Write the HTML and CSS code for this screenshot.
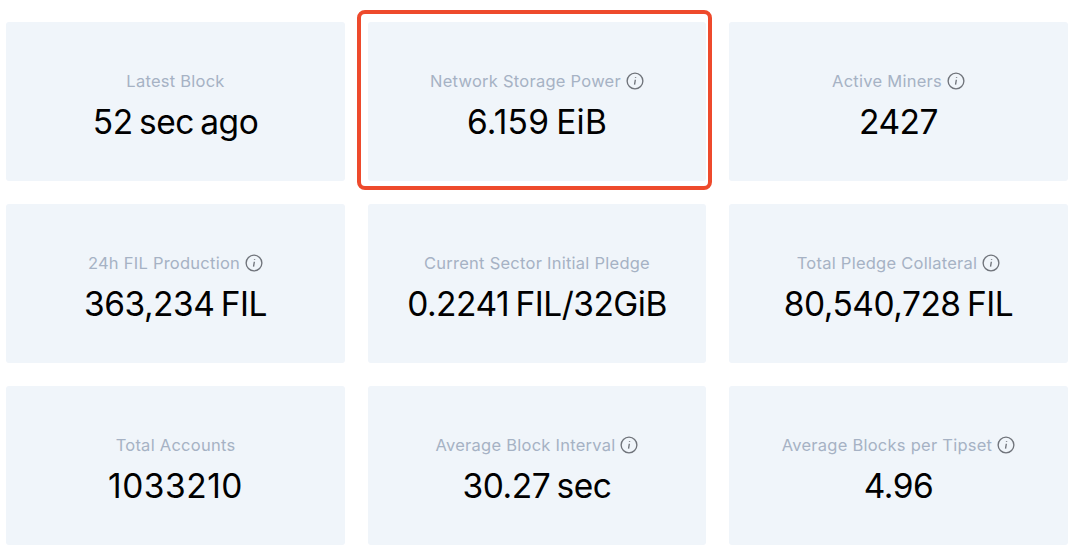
FILE: index.html
```html
<!DOCTYPE html>
<html lang="en">
<head>
<meta charset="utf-8">
<title>Network Stats</title>
<link rel="stylesheet" href="styles.css">
</head>
<body>
<main class="grid">
  <section class="card"><div class="label"><span>Latest Block</span></div><div class="value">52 sec ago</div></section>
  <section class="card"><div class="label"><span>Network Storage Power</span><svg class="info" viewBox="0 0 16 16"><circle cx="8" cy="8" r="7"/><path d="M8.3 6.9 7.6 11.2M8.5 4.4v.6"/></svg></div><div class="value value-loose">6.159 EiB</div><div class="highlight"></div></section>
  <section class="card"><div class="label"><span>Active Miners</span><svg class="info" viewBox="0 0 16 16"><circle cx="8" cy="8" r="7"/><path d="M8.3 6.9 7.6 11.2M8.5 4.4v.6"/></svg></div><div class="value">2427</div></section>
  <section class="card"><div class="label"><span>24h FIL Production</span><svg class="info" viewBox="0 0 16 16"><circle cx="8" cy="8" r="7"/><path d="M8.3 6.9 7.6 11.2M8.5 4.4v.6"/></svg></div><div class="value">363,234 FIL</div></section>
  <section class="card"><div class="label"><span>Current Sector Initial Pledge</span></div><div class="value">0.2241 FIL/32GiB</div></section>
  <section class="card"><div class="label"><span>Total Pledge Collateral</span><svg class="info" viewBox="0 0 16 16"><circle cx="8" cy="8" r="7"/><path d="M8.3 6.9 7.6 11.2M8.5 4.4v.6"/></svg></div><div class="value">80,540,728 FIL</div></section>
  <section class="card"><div class="label"><span>Total Accounts</span></div><div class="value value-wide">1033210</div></section>
  <section class="card"><div class="label"><span>Average Block Interval</span><svg class="info" viewBox="0 0 16 16"><circle cx="8" cy="8" r="7"/><path d="M8.3 6.9 7.6 11.2M8.5 4.4v.6"/></svg></div><div class="value">30.27 sec</div></section>
  <section class="card"><div class="label"><span>Average Blocks per Tipset</span><svg class="info" viewBox="0 0 16 16"><circle cx="8" cy="8" r="7"/><path d="M8.3 6.9 7.6 11.2M8.5 4.4v.6"/></svg></div><div class="value">4.96</div></section>
</main>
</body>
</html>
```
FILE: styles.css
```css
html, body {
  margin: 0;
  padding: 0;
  background: #fff;
}
body {
  width: 1080px;
  height: 556px;
  overflow: hidden;
  font-family: Inter, "Liberation Sans", sans-serif;
}
.grid {
  display: grid;
  grid-template-columns: 339px 338px 339px;
  grid-auto-rows: 159px;
  gap: 23px;
  padding: 22px 0 0 6px;
}
.card {
  position: relative;
  background: #f0f5fa;
  border-radius: 3px;
  display: flex;
  flex-direction: column;
  align-items: center;
  padding-top: 49px;
  box-sizing: border-box;
}
.label {
  display: flex;
  align-items: center;
  gap: 5px;
  height: 20px;
  font-size: 16.5px;
  line-height: 20px;
  letter-spacing: 0.25px;
  color: #a6b2c4;
}
.info {
  width: 18px;
  height: 18px;
  fill: none;
  stroke: #6f737a;
  stroke-width: 1.2;
}
.value {
  margin-top: 11px;
  font-size: 33.5px;
  line-height: 40px;
  letter-spacing: -0.5px;
  word-spacing: -2.5px;
  font-optical-sizing: none;
  color: #000;
}
.value-loose {
  letter-spacing: 0.2px;
}
.value-wide {
  letter-spacing: 0.5px;
}
.highlight {
  position: absolute;
  left: -11px;
  top: -12px;
  width: 355px;
  height: 180px;
  box-sizing: border-box;
  border: 4px solid #ee4a2c;
  border-radius: 8px;
}
```
